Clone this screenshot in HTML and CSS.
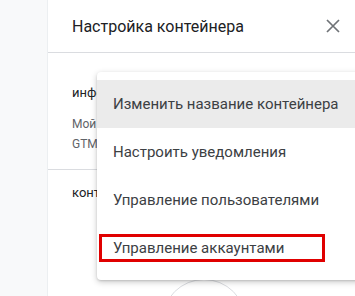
FILE: index.html
```html
<!DOCTYPE html>
<html lang="ru">
<head>
<meta charset="utf-8">
<link rel="stylesheet" href="styles.css">
</head>
<body>
<div class="app">
  <div class="side"></div>
  <div class="panel">
    <div class="header">
      <div class="title">Настройка контейнера</div>
      <svg class="close" width="14" height="14" viewBox="0 0 14 14"><path d="M1 1L13 13M13 1L1 13" stroke="#6f7377" stroke-width="1.7" fill="none"/></svg>
    </div>
    <div class="section info">
      <div class="label">информация о контейнере</div>
      <div class="line">Мой контейнер</div>
      <div class="line">GTM-XXXXXXX</div>
    </div>
    <div class="section cont">
      <div class="label">контейнер</div>
      <div class="circle"></div>
    </div>
  </div>
  <div class="menu">
    <div class="item active">Изменить название контейнера</div>
    <div class="item">Настроить уведомления</div>
    <div class="item">Управление пользователями</div>
    <div class="item marked"><span>Управление аккаунтами</span></div>
  </div>
</div>
</body>
</html>
```
FILE: styles.css
```css
html, body {
  margin: 0;
  padding: 0;
  width: 355px;
  height: 296px;
  overflow: hidden;
  font-family: Roboto, "Noto Sans", sans-serif;
  background: #fff;
}
.app {
  display: flex;
  height: 296px;
  position: relative;
  overflow: hidden;
}
.side {
  width: 47px;
  background: #f8f9fa;
  border-right: 1px solid #eceff1;
  flex-shrink: 0;
}
.panel {
  flex: 1;
  background: #fff;
}
.header {
  height: 52px;
  border-bottom: 1px solid #dadce0;
  display: flex;
  align-items: center;
  justify-content: space-between;
  padding: 0 15px 0 24px;
}
.title {
  font-size: 16px;
  color: #202124;
  padding-top: 1px;
}
.close {
  display: block;
}
.section {
  padding: 0 24px;
}
.info {
  height: 117px;
  border-bottom: 1px solid #dadce0;
  padding-top: 32px;
  box-sizing: border-box;
}
.label {
  font-size: 13px;
  color: #202124;
  margin-bottom: 14px;
}
.line {
  font-size: 12px;
  color: #5f6368;
  line-height: 20px;
}
.cont {
  padding-top: 15px;
  position: relative;
  height: 126px;
  box-sizing: border-box;
  overflow: hidden;
}
.circle {
  position: absolute;
  left: 114px;
  top: 109px;
  width: 82px;
  height: 82px;
  border: 1.5px solid #dadce0;
  border-radius: 50%;
}
.menu {
  position: absolute;
  left: 97px;
  top: 72px;
  width: 272px;
  padding: 8px 0;
  background: #fff;
  border-radius: 4px;
  box-shadow: 0 2px 6px rgba(0,0,0,0.22), 0 1px 2px rgba(0,0,0,0.12);
}
.item {
  height: 48px;
  display: flex;
  align-items: center;
  padding-left: 16px;
  font-size: 15px;
  color: #3c4043;
  white-space: nowrap;
  position: relative;
}
.item.active {
  background: #ebebeb;
}
.marked span {
  position: relative;
}
.marked::before {
  content: "";
  position: absolute;
  left: 2px;
  top: 10px;
  width: 220px;
  height: 22px;
  border: 3px solid #e00000;
}
```
